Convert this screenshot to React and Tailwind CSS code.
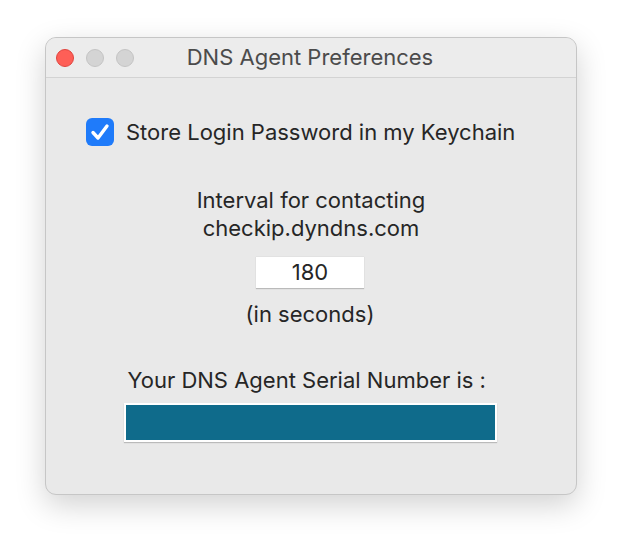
import React from "react";

function TrafficLights() {
  return (
    <div className="absolute left-[10px] top-[11px] flex gap-[12px]">
      <span className="block w-[18px] h-[18px] rounded-full bg-[#fe5f57] border border-[#e0443e]" />
      <span className="block w-[18px] h-[18px] rounded-full bg-[#d4d4d4] border border-[#c4c4c4]" />
      <span className="block w-[18px] h-[18px] rounded-full bg-[#d4d4d4] border border-[#c4c4c4]" />
    </div>
  );
}

function Checkbox() {
  return (
    <span className="flex items-center justify-center w-[28px] h-[28px] rounded-[6px] bg-[#1f7bfa]">
      <svg width="20" height="18" viewBox="0 0 20 18" fill="none">
        <path d="M3 9.5 L8 15 L17 3" stroke="white" strokeWidth="3.4" strokeLinecap="round" strokeLinejoin="round" />
      </svg>
    </span>
  );
}

export default function App() {
  return (
    <div className="w-[622px] h-[548px] bg-white pt-[37px] pl-[45px]" style={{ fontFamily: "Inter, 'Noto Sans', sans-serif" }}>
      <div className="w-[532px] h-[458px] rounded-[11px] border border-[#c6c6c6] bg-[#e9e9e9] overflow-hidden shadow-[0_10px_30px_rgba(0,0,0,0.18)]">
        <div className="relative h-[40px] bg-[#ececec] border-b border-[#d3d3d3] flex items-center justify-center">
          <TrafficLights />
          <span className="text-[22px] text-[#4b4b4b] ml-[-2px]">DNS Agent Preferences</span>
        </div>
        <div className="flex flex-col pt-[40px] text-[#262626] text-[22px]">
          <label className="flex items-center gap-[12px] pl-[40px] h-[28px]">
            <Checkbox />
            <span>Store Login Password in my Keychain</span>
          </label>
          <div className="mt-[40px] flex flex-col items-center leading-[28px]">
            <span>Interval for contacting</span>
            <span>checkip.dyndns.com</span>
          </div>
          <div className="mt-[14px] flex justify-center">
            <div className="w-[108px] h-[32px] bg-white flex items-center justify-center shadow-[0_1px_1px_rgba(0,0,0,0.2)] border-t border-[#e2e2e2] ml-[-2px]">
              180
            </div>
          </div>
          <div className="mt-[12px] flex justify-center leading-[28px] ml-[-2px]">(in seconds)</div>
          <div className="mt-[38px] flex flex-col items-center">
            <div className="w-[373px] ml-[-2px]">
              <div className="leading-[28px] pl-[4px]">Your DNS Agent Serial Number is :</div>
              <div className="mt-[9px] h-[39px] bg-white p-[2px] shadow-[0_1px_1px_rgba(0,0,0,0.2)]">
                <div className="h-full bg-[#0f6b8b]" />
              </div>
            </div>
          </div>
        </div>
      </div>
    </div>
  );
}
